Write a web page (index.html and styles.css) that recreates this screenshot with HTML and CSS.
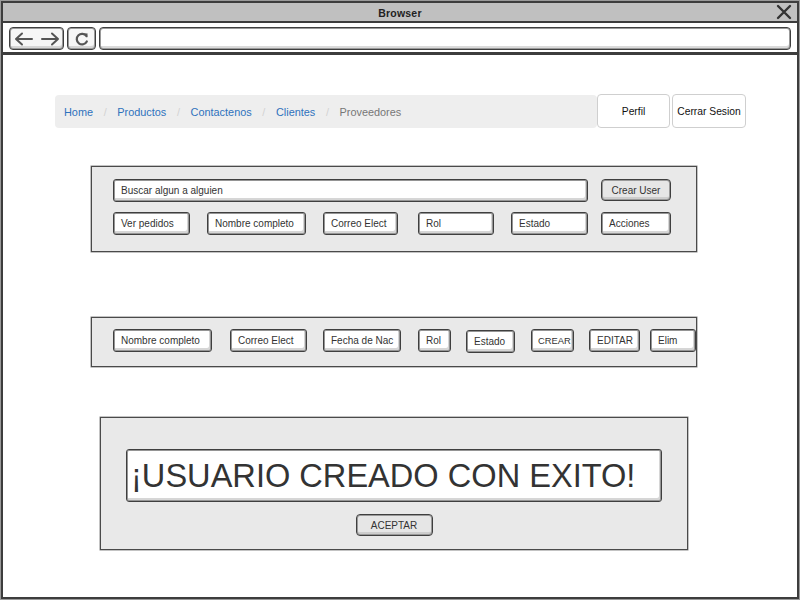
FILE: index.html
```html
<!DOCTYPE html>
<html lang="es">
<head>
<meta charset="utf-8">
<title>Browser</title>
<link rel="stylesheet" href="styles.css">
</head>
<body>
<div class="window">
  <div class="titlebar">
    <span></span>
    <span class="title">Browser</span>
    <svg class="close" width="16" height="16" viewBox="0 0 16 16"><path d="M2 2 L14 14 M14 2 L2 14" stroke="#333" stroke-width="2.4" stroke-linecap="round" fill="none"/></svg>
  </div>
  <div class="toolbar">
    <div class="tb-btn tb-nav">
      <svg width="20" height="14" viewBox="0 0 20 14"><path d="M2 7 H18 M8 1.5 L2 7 L8 12.5" stroke="#555" stroke-width="2" fill="none" stroke-linecap="round" stroke-linejoin="round"/></svg>
      <svg width="20" height="14" viewBox="0 0 20 14"><path d="M2 7 H18 M12 1.5 L18 7 L12 12.5" stroke="#555" stroke-width="2" fill="none" stroke-linecap="round" stroke-linejoin="round"/></svg>
    </div>
    <div class="tb-btn tb-refresh">
      <svg width="16" height="16" viewBox="0 0 16 16"><path d="M12.5 5.2 A5.3 5.3 0 1 0 12.8 10.5" stroke="#555" stroke-width="2.2" fill="none" stroke-linecap="round"/><path d="M9.2 2.2 L13.6 2.4 L13.2 6.6 Z" fill="#555"/></svg>
    </div>
    <div class="address"></div>
  </div>
  <div class="content">
    <div class="topnav">
      <nav class="crumbs">
        <a class="crumb">Home</a><span class="sep">/</span>
        <a class="crumb">Productos</a><span class="sep">/</span>
        <a class="crumb">Contactenos</a><span class="sep">/</span>
        <a class="crumb">Clientes</a><span class="sep">/</span>
        <span class="crumb current">Proveedores</span>
      </nav>
      <button class="nav-btn nb-perfil">Perfil</button>
      <button class="nav-btn nb-cerrar">Cerrar Sesion</button>
    </div>

    <section class="panel panel-search">
      <div class="row">
        <div class="field w-search">Buscar algun a alguien</div>
        <button class="btn w-70">Crear User</button>
      </div>
      <div class="row">
        <div class="field w-77">Ver pedidos</div>
        <div class="field w-99 ml-17">Nombre completo</div>
        <div class="field w-75 ml-17">Correo Elect</div>
        <div class="field w-76 ml-20">Rol</div>
        <div class="field w-77 ml-17">Estado</div>
        <div class="field w-70 ml-13">Acciones</div>
      </div>
    </section>

    <section class="panel panel-form">
      <div class="row">
        <div class="field w-99">Nombre completo</div>
        <div class="field w-77 ml-18">Correo Elect</div>
        <div class="field w-78 ml-16">Fecha de Nac</div>
        <div class="field w-33 ml-17">Rol</div>
        <div class="field w-49 ml-15 low">Estado</div>
        <div class="field w-43 ml-16 small">CREAR</div>
        <div class="field w-51 ml-15">EDITAR</div>
        <div class="field w-46 ml-10">Elim</div>
      </div>
    </section>

    <section class="panel panel-msg">
      <div class="field big">¡USUARIO CREADO CON EXITO!</div>
      <button class="btn w-77 accept">ACEPTAR</button>
    </section>
  </div>
</div>
</body>
</html>
```

FILE: styles.css
```css
html, body {
  margin: 0;
  padding: 0;
  background: #fff;
}
body {
  width: 800px;
  height: 601px;
  overflow: hidden;
  font-family: "Liberation Sans", Arial, sans-serif;
  color: #222;
}
.window {
  box-sizing: border-box;
  width: 798px;
  height: 598px;
  margin: 1px;
  border: 2px solid #3d3d3d;
  box-shadow: 0 0 0 1px #9a9a9a;
  display: flex;
  flex-direction: column;
  background: #fff;
}
.titlebar {
  height: 18px;
  background: #c0c0c0;
  border-bottom: 2px solid #3d3d3d;
  display: grid;
  grid-template-columns: 1fr auto 1fr;
  align-items: center;
}
.title {
  font-size: 10.5px;
  font-weight: bold;
  color: #222;
  letter-spacing: 0.2px;
  padding-top: 2px;
}
.close {
  justify-self: end;
  margin-right: 5px;
}
.toolbar {
  box-sizing: border-box;
  height: 32px;
  border-bottom: 3px solid #3d3d3d;
  display: flex;
  align-items: flex-start;
  padding: 4px 6px 0 6px;
  gap: 3px;
}
.tb-btn {
  box-sizing: border-box;
  height: 23px;
  border: 1px solid #3f3f3f;
  border-radius: 4px;
  background: #f6f6f6;
  box-shadow: inset 0 0 0 1px #9a9a9a, inset -1px -3px 0 0 #d6d6d6;
  display: flex;
  align-items: center;
  justify-content: center;
}
.tb-nav { width: 55px; gap: 6px; }
.tb-refresh { width: 29px; }
.address {
  flex: 1;
  box-sizing: border-box;
  height: 23px;
  border: 1px solid #3f3f3f;
  border-radius: 4px;
  background: #fff;
  box-shadow: inset 0 0 0 1px #9a9a9a, inset -1px -3px 0 0 #dadada;
}
.content {
  flex: 1;
  display: flex;
  flex-direction: column;
  align-items: flex-start;
}
.topnav {
  margin-top: 39px;
  margin-left: 52px;
  display: flex;
  align-items: center;
}
.crumbs {
  box-sizing: border-box;
  width: 542px;
  height: 33px;
  background: #eeeeee;
  border-radius: 4px;
  display: flex;
  align-items: center;
  padding-left: 9px;
  padding-top: 2px;
  font-size: 10.9px;
}
.crumb {
  color: #2f72bd;
  text-decoration: none;
}
.crumb.current { color: #777; }
.sep {
  color: #d2d2d2;
  padding: 0 10.6px;
}
.nav-btn {
  box-sizing: border-box;
  height: 34px;
  background: #fff;
  border: 1px solid #cfcfcf;
  border-radius: 4px;
  font-family: inherit;
  font-size: 10.3px;
  color: #111;
  padding: 0;
}
.nb-perfil { width: 73px; }
.nb-cerrar { width: 74px; margin-left: 2px; }

.panel {
  box-sizing: border-box;
  background: #e9e9e9;
  border: 1px solid #4a4a4a;
  box-shadow: 0 0 0 0.5px #888;
}
.panel-search {
  width: 606px;
  height: 86px;
  margin-top: 38px;
  margin-left: 88px;
  padding: 12px 0 0 21px;
  display: flex;
  flex-direction: column;
  gap: 10px;
}
.panel-form {
  width: 606px;
  height: 50px;
  margin-top: 65px;
  margin-left: 88px;
  padding: 11px 0 0 21px;
  overflow: hidden;
}
.panel-msg {
  width: 588px;
  height: 133px;
  margin-top: 50px;
  margin-left: 97px;
  padding-top: 31px;
  display: flex;
  flex-direction: column;
  align-items: center;
}
.row {
  display: flex;
  align-items: flex-start;
  flex-wrap: nowrap;
}
.field {
  box-sizing: border-box;
  flex: none;
  height: 23px;
  border: 1px solid #3f3f3f;
  border-radius: 3px;
  background: #fff;
  box-shadow: inset 0 0 0 1px #959595, inset -2px -3px 0 0 #d6d6d6;
  font-size: 10px;
  color: #333;
  padding: 0 7px;
  display: flex;
  align-items: center;
  white-space: nowrap;
  overflow: hidden;
}
.field.low { margin-top: 1px; }
.field.small { font-size: 9.4px; padding: 0 6px; }
.btn {
  box-sizing: border-box;
  flex: none;
  height: 22px;
  border: 1px solid #3f3f3f;
  border-radius: 4px;
  background: #e6e6e6;
  box-shadow: inset 0 0 0 1px #9a9a9a, inset 0 -3px 0 0 #cdcdcd;
  font-family: inherit;
  font-size: 10px;
  color: #333;
  padding: 0;
  margin-left: 13px;
}
.btn.accept { margin-left: 0; margin-top: 12px; }
.big {
  width: 536px;
  height: 53px;
  font-size: 32.6px;
  padding: 0 4px;
  color: #333;
}
.w-search { width: 475px; }
.w-99 { width: 99px; }
.w-78 { width: 78px; }
.w-77 { width: 77px; }
.w-76 { width: 76px; }
.w-75 { width: 75px; }
.w-70 { width: 70px; }
.w-51 { width: 51px; }
.w-49 { width: 49px; }
.w-46 { width: 46px; }
.w-43 { width: 43px; }
.w-33 { width: 33px; }
.ml-10 { margin-left: 10px; }
.ml-13 { margin-left: 13px; }
.ml-15 { margin-left: 15px; }
.ml-16 { margin-left: 16px; }
.ml-17 { margin-left: 17px; }
.ml-18 { margin-left: 18px; }
.ml-20 { margin-left: 20px; }
```
